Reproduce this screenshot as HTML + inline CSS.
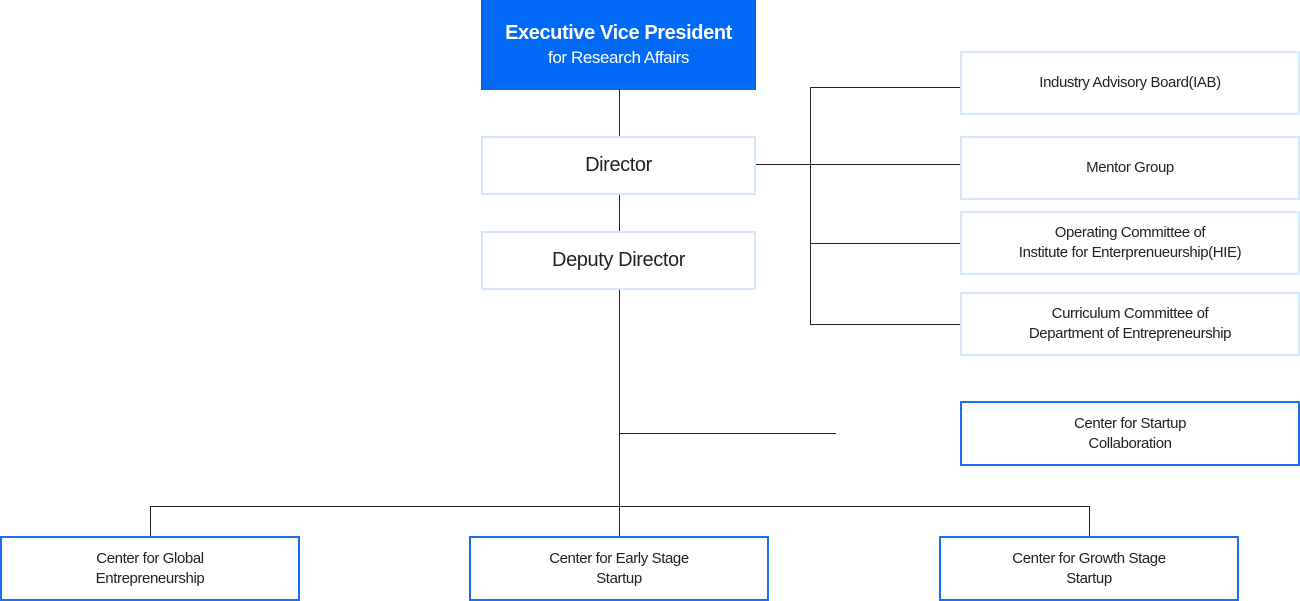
<!DOCTYPE html>
<html><head><style>
body{margin:0;width:1300px;height:601px;background:#fff;position:relative;overflow:hidden;font-family:"Liberation Sans","Noto Sans CJK KR",sans-serif;color:#222}
.b{position:absolute;box-sizing:border-box;display:flex;align-items:center;justify-content:center;text-align:center;flex-direction:column;letter-spacing:-0.4px}
.l{border:2px solid #d6e6fb}
.d{border:2px solid #1a6ff0}
.s{font-size:15px;line-height:20px}
.h{position:absolute;background:#222;height:1px}
.v{position:absolute;background:#222;width:1px}
</style></head><body>
<div class="b" style="left:481px;top:0;width:275px;height:90px;background:#0069f6;color:#fff">
<div style="font-size:20px;font-weight:bold;line-height:26px">Executive Vice President</div>
<div style="font-size:17px;line-height:24px">for Research Affairs</div></div>
<div class="b l" style="left:481px;top:136px;width:275px;height:59px;font-size:20px">Director</div>
<div class="b l" style="left:481px;top:231px;width:275px;height:59px;font-size:20px">Deputy Director</div>
<div class="v" style="left:619px;top:90px;height:46px"></div>
<div class="v" style="left:619px;top:195px;height:36px"></div>
<div class="v" style="left:619px;top:290px;height:247px"></div>
<div class="v" style="left:810px;top:87px;height:238px"></div>
<div class="h" style="left:810px;top:87px;width:150px"></div>
<div class="h" style="left:756px;top:164px;width:204px"></div>
<div class="h" style="left:810px;top:243px;width:150px"></div>
<div class="h" style="left:810px;top:324px;width:150px"></div>
<div class="b l s" style="left:960px;top:51px;width:340px;height:64px">Industry Advisory Board(IAB)</div>
<div class="b l s" style="left:960px;top:136px;width:340px;height:64px">Mentor Group</div>
<div class="b l s" style="left:960px;top:211px;width:340px;height:64px">Operating Committee of<br>Institute for Enterprenueurship(HIE)</div>
<div class="b l s" style="left:960px;top:292px;width:340px;height:64px">Curriculum Committee of<br>Department of Entrepreneurship</div>
<div class="h" style="left:619px;top:433px;width:217px"></div>
<div class="b d s" style="left:960px;top:401px;width:340px;height:65px">Center for Startup<br>Collaboration</div>
<div class="h" style="left:150px;top:506px;width:940px"></div>
<div class="v" style="left:150px;top:506px;height:31px"></div>
<div class="v" style="left:1089px;top:506px;height:31px"></div>
<div class="b d s" style="left:0;top:536px;width:300px;height:65px">Center for Global<br>Entrepreneurship</div>
<div class="b d s" style="left:469px;top:536px;width:300px;height:65px">Center for Early Stage<br>Startup</div>
<div class="b d s" style="left:939px;top:536px;width:300px;height:65px">Center for Growth Stage<br>Startup</div>
</body></html>
